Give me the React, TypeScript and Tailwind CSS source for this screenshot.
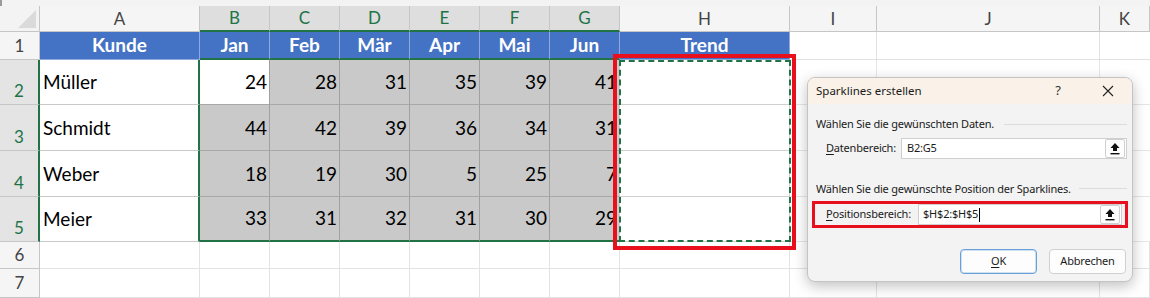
import React from "react";

const cols = ["A", "B", "C", "D", "E", "F", "G", "H", "I", "J", "K"];
const selCols = ["B", "C", "D", "E", "F", "G"];
const months = ["Jan", "Feb", "Mär", "Apr", "Mai", "Jun"];

const data = [
  { n: 2, name: "Müller", v: [24, 28, 31, 35, 39, 41] },
  { n: 3, name: "Schmidt", v: [44, 42, 39, 36, 34, 31] },
  { n: 4, name: "Weber", v: [18, 19, 30, 5, 25, 7] },
  { n: 5, name: "Meier", v: [33, 31, 32, 31, 30, 29] },
];

const UploadIcon = () => (
  <svg width="12" height="13" viewBox="0 0 12 13">
    <path d="M6 1 L1.5 6 H4 V9 H8 V6 H10.5 Z" fill="#111" />
    <rect x="1.5" y="11" width="9" height="1.4" fill="#111" />
  </svg>
);

const RefButton = () => (
  <div className="flex h-[19px] w-[20px] shrink-0 items-center justify-center rounded-[2px] border border-[#d0d0d0] bg-[#fdfdfd]">
    <UploadIcon />
  </div>
);

const Dialog = () => (
  <div
    className="absolute left-[807px] top-[77px] flex h-[205px] w-[326px] flex-col overflow-hidden rounded-[8px] border border-[#c4c4c4] bg-[#f3f3f3] text-[11px] tracking-[-0.2px] text-[#1a1a1a] shadow-[0_4px_14px_rgba(0,0,0,0.25)]"
    style={{ fontFamily: '"Noto Sans", "Segoe UI", sans-serif' }}
  >
    <div className="flex h-[26px] shrink-0 items-center bg-[#faf2e8] pl-[8px] text-[11.5px] tracking-normal">
      <span className="flex-1">Sparklines erstellen</span>
      <span className="w-[12px] text-center text-[13px] text-[#333]">?</span>
      <svg className="ml-[38px] mr-[18px]" width="12" height="12" viewBox="0 0 12 12">
        <path d="M1 1 L11 11 M11 1 L1 11" stroke="#222" strokeWidth="1.1" />
      </svg>
    </div>
    <div className="mt-[12px] flex items-center pl-[8px] pr-[5px]">
      <span className="shrink-0">Wählen Sie die gewünschten Daten.</span>
      <div className="ml-[10px] h-px flex-1 bg-[#dcdcdc]" />
    </div>
    <div className="mt-[5px] flex h-[21px] items-center pl-[18px] pr-[5px]">
      <span className="w-[75px] shrink-0">
        <span className="underline underline-offset-2">D</span>atenbereich:
      </span>
      <div className="flex h-[21px] flex-1 items-center justify-between border border-[#cfcfcf] bg-white pl-[5px] pr-px">
        <span>B2:G5</span>
        <RefButton />
      </div>
    </div>
    <div className="mt-[22px] flex items-center pl-[8px] pr-[5px]">
      <span className="shrink-0">Wählen Sie die gewünschte Position der Sparklines.</span>
      <div className="ml-[8px] h-px flex-1 bg-[#dcdcdc]" />
    </div>
    <div className="mx-[4px] mt-[4px] flex h-[27px] items-center border-[3px] border-[#e8101d] pl-[11px] pr-[3px]">
      <span className="w-[92px] shrink-0">
        <span className="underline underline-offset-2">P</span>ositionsbereich:
      </span>
      <div className="flex h-[21px] flex-1 items-center justify-between border border-[#cfcfcf] bg-white pl-[4px] pr-px">
        <span className="flex items-center">
          $H$2:$H$5<span className="ml-px inline-block h-[14px] w-px bg-black" />
        </span>
        <RefButton />
      </div>
    </div>
    <div className="mt-[21px] flex justify-end gap-[12px] pr-[6px]">
      <div className="flex h-[25px] w-[77px] items-center justify-center rounded-[4px] border border-[#6aa0d8] bg-[#fdfdfd] shadow-[inset_0_0_0_1px_#cfe0f3]">
        <span className="underline underline-offset-2">O</span>K
      </div>
      <div className="flex h-[25px] w-[77px] items-center justify-center rounded-[4px] border border-[#d0d0d0] bg-[#fdfdfd]">
        Abbrechen
      </div>
    </div>
  </div>
);

export default function App() {
  const rowHeights = ["h-[45px]", "h-[46px]", "h-[46px]", "h-[45px]"];
  return (
    <div
      className="relative h-[298px] w-[1150px] overflow-hidden bg-white"
      style={{ fontFamily: 'Lato, "Liberation Sans", sans-serif' }}
    >
      <div className="h-[6px] border-l-2 border-[#9a9a9a] bg-[#f3f3f3]" />
      <div className="grid grid-cols-[40px_160px_70px_70px_70px_70px_70px_70px_170px_87px_223px_50px] grid-rows-[26px_28px_45px_46px_46px_45px_27px_29px]">
        {/* column headers */}
        <div className="relative border-r border-b border-[#c6c6c6] bg-[#f3f3f3]">
          <div className="absolute bottom-[3px] right-[3px] h-0 w-0 border-t-[18px] border-r-[18px] border-t-transparent border-r-[#dadada]" />
        </div>
        {cols.map((c) => {
          const sel = selCols.includes(c);
          return (
            <div
              key={c}
              className={
                sel
                  ? "flex items-center justify-center border-r border-b-2 border-r-[#c6c6c6] border-b-[#217346] bg-[#dedede] text-[17px] text-[#217346]"
                  : "flex items-center justify-center border-r border-b border-[#c6c6c6] bg-[#f5f5f5] text-[17px] text-[#444]"
              }
            >
              {c}
            </div>
          );
        })}

        {/* row 1 */}
        <div className="flex items-center justify-center border-r border-b border-[#c6c6c6] bg-[#f5f5f5] text-[17px] text-[#444]">1</div>
        <div className="flex items-center justify-center border-r border-b border-[#8fa9dc] bg-[#4472c4] text-[19px] font-bold text-white">Kunde</div>
        {months.map((m) => (
          <div
            key={m}
            className="flex items-center justify-center border-r border-b-2 border-r-[#8fa9dc] border-b-[#217346] bg-[#4472c4] text-[19px] font-bold text-white"
          >
            {m}
          </div>
        ))}
        <div className="flex items-center justify-center border-r border-b border-[#8fa9dc] bg-[#4472c4] text-[19px] font-bold text-white">Trend</div>
        <div className="border-r border-b border-[#e1e1e1]" />
        <div className="border-r border-b border-[#e1e1e1]" />
        <div className="border-b border-[#e1e1e1]" />

        {/* data rows */}
        {data.map((r, ri) => (
          <React.Fragment key={r.n}>
            <div className={`flex items-end justify-center border-r-2 border-b border-r-[#217346] border-b-[#c6c6c6] bg-[#e4e4e4] pb-[1px] text-[17px] text-[#217346] ${rowHeights[ri]}`}>
              {r.n}
            </div>
            <div className="flex items-end border-r-2 border-b border-r-[#217346] border-b-[#c9c9c9] bg-white pb-[8px] pl-[3px] text-[19px] text-black">
              {r.name}
            </div>
            {r.v.map((v, i) => {
              const active = ri === 0 && i === 0;
              const last = ri === 3;
              return (
                <div
                  key={i}
                  className={
                    (active ? "bg-white " : "bg-[#c9c9c9] ") +
                    (last ? "border-b-2 border-b-[#217346] " : "border-b border-b-[#a8a8a8] ") +
                    (i === 5 ? "border-r border-r-[#d0d0d0] " : "border-r border-r-[#a0a0a0] ") +
                    "flex items-end justify-end pb-[8px] pr-[2px] text-[19px] text-black"
                  }
                >
                  {v}
                </div>
              );
            })}
            <div className="border-r border-b border-[#d0d0d0] bg-white" />
            <div className="border-r border-b border-[#e6e6e6]" />
            <div className="border-r border-b border-[#e6e6e6]" />
            <div className="border-b border-[#e6e6e6]" />
          </React.Fragment>
        ))}

        {/* empty rows */}
        {[6, 7].map((n) => (
          <React.Fragment key={n}>
            <div className="flex items-center justify-center border-r border-b border-[#c6c6c6] bg-[#f5f5f5] text-[17px] text-[#444]">{n}</div>
            {cols.map((c) => (
              <div key={c} className="border-r border-b border-[#e3e3e3]" />
            ))}
          </React.Fragment>
        ))}
      </div>

      {/* marquee + annotation over column H */}
      <div className="absolute left-[619px] top-[60px] h-[182px] w-[172px] border-2 border-dashed border-[#217346]" />
      <div className="absolute left-[613px] top-[54px] h-[196px] w-[183px] border-[4px] border-[#e8101d]" />

      <Dialog />
    </div>
  );
}
